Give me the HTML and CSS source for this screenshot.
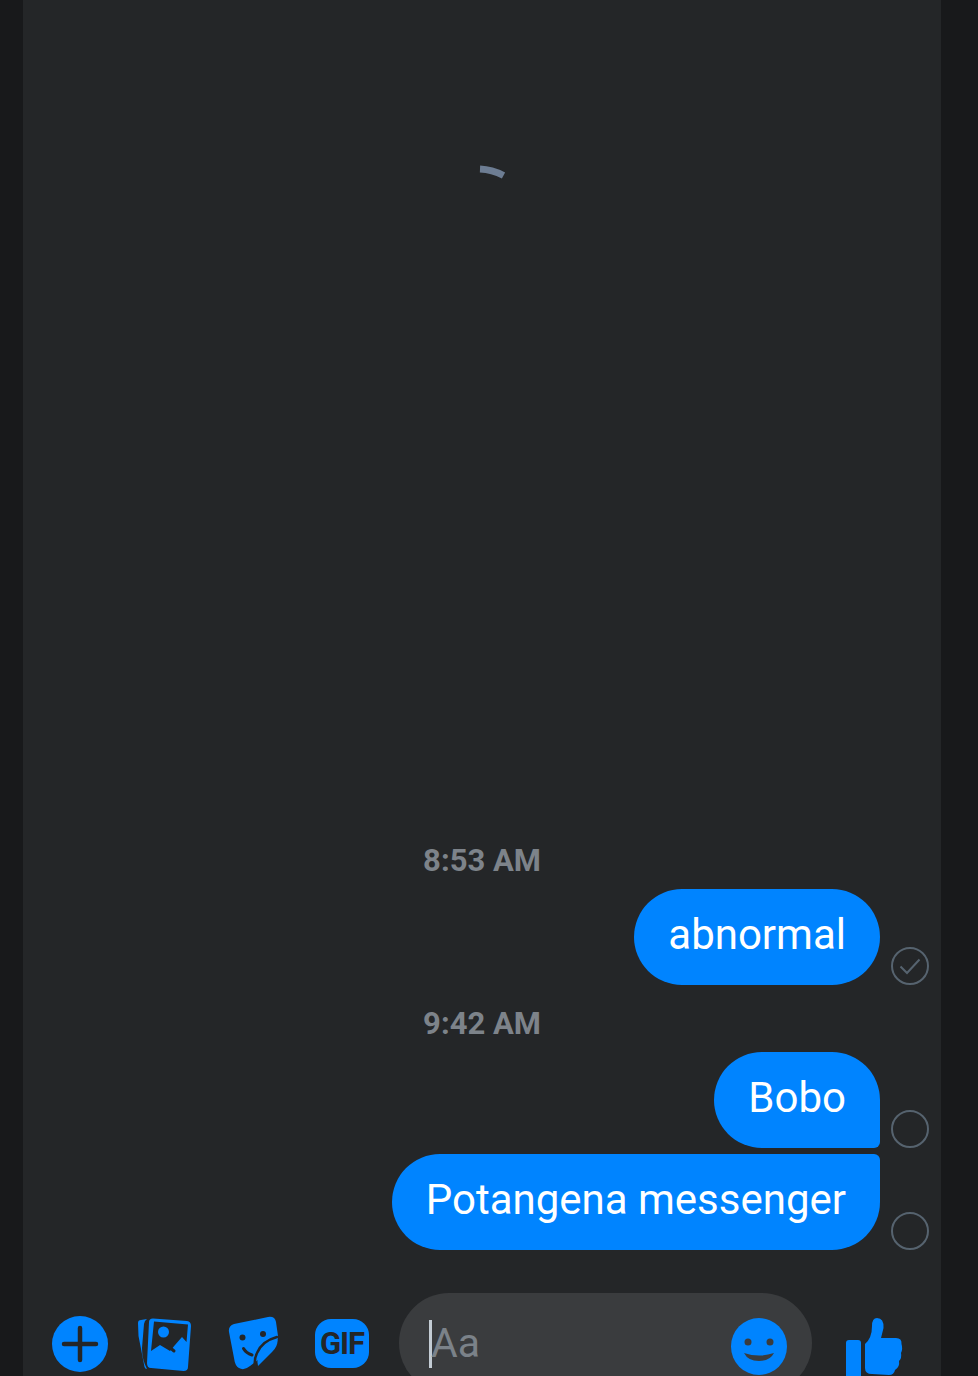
FILE: index.html
```html
<!DOCTYPE html>
<html lang="en">
<head>
    <meta charset="UTF-8">
    <meta name="viewport" content="width=device-width, initial-scale=1.0">
    <title>Messenger</title>
    <link rel="stylesheet" href="styles.css">
</head>
<body>
    <div class="frame">
        <div class="thread">
            <svg class="spinner" width="60" height="60" viewBox="0 0 60 60">
                <path d="M28 9Q40 9.500 51.500 15.500" fill="none" stroke="#6d7d93" stroke-width="7"/>
            </svg>

            <div class="time">8:53 AM</div>
            <div class="row">
                <div class="bubble">abnormal</div>
                <svg class="status" width="38" height="38" viewBox="0 0 38 38">
                    <circle cx="19" cy="19" r="18" fill="none" stroke="#56636f" stroke-width="2"/>
                    <path d="M9.500 19.500L16 26L28.500 12.500" fill="none" stroke="#56636f" stroke-width="2"/>
                </svg>
            </div>

            <div class="time">9:42 AM</div>
            <div class="row">
                <div class="bubble bubble-first">Bobo</div>
                <svg class="status" width="38" height="38" viewBox="0 0 38 38">
                    <circle cx="19" cy="19" r="18" fill="none" stroke="#56636f" stroke-width="2"/>
                </svg>
            </div>
            <div class="row row-next">
                <div class="bubble bubble-last">Potangena messenger</div>
                <svg class="status" width="38" height="38" viewBox="0 0 38 38">
                    <circle cx="19" cy="19" r="18" fill="none" stroke="#56636f" stroke-width="2"/>
                </svg>
            </div>
        </div>

        <div class="composer">
            <svg class="icon-plus" width="56" height="56" viewBox="0 0 56 56">
                <circle cx="28" cy="28" r="28" fill="#0084ff"/>
                <path d="M12 28H44M28 12V44" stroke="#242628" stroke-width="4.500" stroke-linecap="round"/>
            </svg>
            <svg class="icon-photo" width="53" height="53" viewBox="0 0 53 53">
                <path d="M0 5Q0 2 3 2L9 1Q6 3 6 6L4 30Q4 42 9 51Q7 51 6.500 49L0.500 18Z" fill="#0084ff"/>
                <path d="M15 0.500L49 3Q53 3.500 53 8L50 49Q50 53 45.500 53L13 50Q9 50 9 45L11 4Q11 0.500 15 0.500Z" fill="#0084ff"/>
                <path d="M16 3.500L50 6.500L48.500 24L44 19L37 27L32 33L22 27L13 33Z" fill="#242628"/>
                <circle cx="25.500" cy="14" r="5.500" fill="#0084ff"/>
                <path d="M29 27L36 33" stroke="#242628" stroke-width="3" stroke-linecap="round"/>
            </svg>
            <svg class="icon-sticker" width="50" height="54" viewBox="0 0 50 54">
                <path d="M6 8L40 1Q47 0 48 6L50 20Q50 27 46 32L22 50Q16 55 11 52Q7 50 6 42L1 16Q0 10 6 8Z" fill="#0084ff"/>
                <path d="M49 21Q34 25 29 37Q26 43 27 51" fill="none" stroke="#242628" stroke-width="2.500" stroke-linecap="round"/>
                <path d="M49.500 24Q50 30 44 36L30 50Q28 42 33 34Q39 27 49.500 24Z" fill="#0084ff"/>
                <circle cx="14.500" cy="21.500" r="3" fill="#242628"/>
                <circle cx="35" cy="18" r="3" fill="#242628"/>
                <path d="M15.500 32.500Q18 37 24 39" fill="none" stroke="#242628" stroke-width="3" stroke-linecap="round"/>
            </svg>
            <div class="gif">GIF</div>

            <div class="input">
                <span class="cursor"></span>
                <span class="placeholder">Aa</span>
                <svg class="icon-smile" width="56" height="57" viewBox="0 0 56 57">
                    <ellipse cx="28" cy="28.500" rx="28" ry="28.500" fill="#0084ff"/>
                    <circle cx="17" cy="24" r="3.500" fill="#3a3c3e"/>
                    <circle cx="39" cy="24" r="3.500" fill="#3a3c3e"/>
                    <path d="M13 35Q28 40 43 35Q39 43 28 43Q17 43 13 35Z" fill="#3a3c3e"/>
                </svg>
            </div>

            <svg class="icon-like" width="58" height="58" viewBox="0 0 58 58">
                <rect x="1" y="22" width="15" height="40" rx="3" fill="#0084ff"/>
                <path d="M20 26Q27 20 27 8Q27 0 32 0Q39 0 38.500 10L36 20H51Q57 20 56.500 26Q58 31 56 35Q57 40 54 43Q55 49 50 52Q49 57 44 57L27 56Q20 56 20 50Z" fill="#0084ff"/>
            </svg>
        </div>
    </div>
</body>
</html>
```

FILE: styles.css
```css
html, body {
    margin: 0;
    height: 100%;
    overflow: hidden;
    background-color: #18191b;
}
.frame {
    width: 918px;
    height: 1376px;
    margin-left: 23px;
    background-color: #242628;
    display: flex;
    flex-direction: column;
    overflow: hidden;
    font-family: Roboto, "Liberation Sans", sans-serif;
}
.thread {
    height: 1293px;
    flex: none;
    box-sizing: border-box;
    padding: 0 12px 43px 0;
    display: flex;
    flex-direction: column;
}
.spinner {
    align-self: center;
    margin: 160px 0 auto 12px;
}
.time {
    margin: 20px -12px 11px 0;
    height: 36px;
    line-height: 37px;
    text-align: center;
    font-size: 31px;
    font-weight: 700;
    color: #7d838a;
}
.row {
    display: flex;
    justify-content: flex-end;
    align-items: flex-end;
    gap: 11px;
}
.row-next {
    margin-top: 6px;
}
.bubble {
    height: 96px;
    line-height: 91px;
    box-sizing: border-box;
    padding: 0 34px;
    border-radius: 48px;
    background-color: #0084ff;
    color: #fff;
    font-size: 42px;
}
.bubble-first {
    border-bottom-right-radius: 6px;
}
.bubble-last {
    border-top-right-radius: 6px;
}
.composer {
    height: 100px;
    flex: none;
    padding-left: 29px;
    display: flex;
    align-items: center;
}
.icon-plus, .icon-photo, .icon-sticker, .icon-smile, .icon-like {
    flex: none;
}
.icon-plus {
    margin: 2px 30px 0 0;
}
.icon-photo {
    margin: 3px 37px 0 0;
}
.icon-sticker {
    margin-right: 37px;
}
.gif {
    width: 54px;
    height: 49px;
    line-height: 49px;
    margin-right: 30px;
    border-radius: 16px;
    background-color: #0084ff;
    color: #242628;
    text-align: center;
    font-size: 31px;
    font-weight: 700;
    letter-spacing: -1px;
}
.input {
    width: 413px;
    height: 100px;
    flex: none;
    box-sizing: border-box;
    padding: 0 25px 0 30px;
    margin-right: 33px;
    border-radius: 50px;
    background-color: #3a3c3e;
    display: flex;
    align-items: center;
}
.cursor {
    width: 3px;
    height: 48px;
    margin-top: 2px;
    background-color: #c3ccd4;
    flex: none;
}
.placeholder {
    flex: 1;
    margin-left: -1px;
    font-size: 41px;
    color: #7b8289;
}
.icon-smile {
    margin-top: 6px;
}
.icon-like {
    margin-top: 8px;
}
```
